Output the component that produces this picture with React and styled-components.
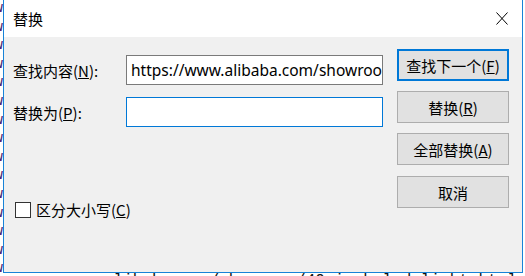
import React from "react";
import styled, { createGlobalStyle } from "styled-components";

const Global = createGlobalStyle`
  html, body { margin: 0; padding: 0; background: #ffffff; }
  body { width: 525px; height: 276px; overflow: hidden; }
`;

const Desktop = styled.div`
  position: relative;
  width: 525px;
  height: 276px;
  overflow: hidden;
  background: #ffffff;
  font-family: "Noto Sans CJK SC", "Noto Sans", sans-serif;
`;

const EditorPane = styled.div`
  position: absolute;
  inset: 0;
  font-family: "Liberation Mono", monospace;
  font-size: 15px;
  line-height: 18.6px;
  white-space: pre;
`;

const EditorLine = styled.div`
  color: ${(p) => p.$color || "#000000"};
  margin-left: ${(p) => p.$indent || 0}px;
`;

const BottomLine = styled.div`
  position: absolute;
  left: 104px;
  top: 273px;
  font-family: "Liberation Mono", monospace;
  font-size: 16px;
  line-height: 16px;
  color: #111;
  white-space: pre;
`;

const Dialog = styled.div`
  position: absolute;
  left: 3px;
  top: -1px;
  width: 520px;
  height: 274px;
  box-sizing: border-box;
  border: 1px solid #1883d7;
  display: flex;
  flex-direction: column;
  background: #f0f0f0;
`;

const TitleBar = styled.div`
  height: 37px;
  background: #ffffff;
  display: flex;
  align-items: center;
  justify-content: space-between;
  padding: 0 14px 0 9px;
  flex-shrink: 0;
`;

const Title = styled.span`
  font-size: 15px;
  color: #000;
  line-height: 1;
`;

const CloseButton = styled.div`
  width: 12px;
  height: 13px;
  display: flex;
  margin-top: -1px;
`;

const Content = styled.div`
  flex: 1;
  display: flex;
  background: #f0f0f0;
`;

const LeftPane = styled.div`
  width: 379px;
  padding: 18px 0 0 9px;
  box-sizing: border-box;
  display: flex;
  flex-direction: column;
`;

const FieldRow = styled.div`
  display: flex;
  align-items: center;
  height: 30px;
  margin-top: ${(p) => p.$gap || 0}px;
`;

const Label = styled.label`
  width: 113px;
  font-size: 15px;
  color: #000;
  flex-shrink: 0;
`;

const Input = styled.div`
  width: 257px;
  height: 30px;
  box-sizing: border-box;
  border: 1px solid ${(p) => (p.$focused ? "#0078d7" : "#7a7a7a")};
  background: #ffffff;
  padding: 0 0 0 4px;
  display: flex;
  align-items: center;
  overflow: hidden;
  white-space: nowrap;
  font-family: "Noto Sans", sans-serif;
  font-size: 15.5px;
  color: #000;
`;

const CheckRow = styled.div`
  display: flex;
  align-items: center;
  margin: 72px 0 0 2px;
  gap: 5px;
`;

const CheckBox = styled.span`
  width: 16px;
  height: 16px;
  box-sizing: border-box;
  border: 1px solid #333333;
  background: #ffffff;
  flex-shrink: 0;
`;

const CheckLabel = styled.span`
  font-size: 15px;
  color: #000;
`;

const ButtonColumn = styled.div`
  display: flex;
  flex-direction: column;
  padding-top: 12px;
  margin-left: 14px;
  gap: 10px;
`;

const Button = styled.div`
  width: 112px;
  height: 32px;
  box-sizing: border-box;
  border: ${(p) => (p.$default ? "2px solid #0078d7" : "1px solid #adadad")};
  background: #e1e1e1;
  display: flex;
  align-items: center;
  justify-content: center;
  font-size: 15px;
  white-space: nowrap;
  color: #000;
  margin-top: ${(p) => p.$extra || 0}px;
`;

const leftLines = Array.from({ length: 15 }, (_, i) => i);

export default function App() {
  return (
    <Desktop>
      <Global />
      <EditorPane>
        {leftLines.map((i) => (
          <EditorLine key={i} $color="#4b1a6b" $indent={-6}>
            w
          </EditorLine>
        ))}
      </EditorPane>
      <BottomLine>alibaba.com/showroom/40-inch-led-light.html</BottomLine>
      <Dialog>
        <TitleBar>
          <Title>替换</Title>
          <CloseButton>
            <svg width="12" height="13" viewBox="0 0 12 13">
              <path d="M0.5 0.5 L11.5 12.5 M11.5 0.5 L0.5 12.5" stroke="#000" strokeWidth="1" fill="none" />
            </svg>
          </CloseButton>
        </TitleBar>
        <Content>
          <LeftPane>
            <FieldRow>
              <Label>
                查找内容(<u>N</u>):
              </Label>
              <Input>https://www.alibaba.com/showroom/40-inch-led-light.html</Input>
            </FieldRow>
            <FieldRow $gap={12}>
              <Label>
                替换为(<u>P</u>):
              </Label>
              <Input $focused />
            </FieldRow>
            <CheckRow>
              <CheckBox />
              <CheckLabel>
                区分大小写(<u>C</u>)
              </CheckLabel>
            </CheckRow>
          </LeftPane>
          <ButtonColumn>
            <Button $default>
              查找下一个(<u>F</u>)
            </Button>
            <Button>
              替换(<u>R</u>)
            </Button>
            <Button>
              全部替换(<u>A</u>)
            </Button>
            <Button $extra={1}>取消</Button>
          </ButtonColumn>
        </Content>
      </Dialog>
    </Desktop>
  );
}
